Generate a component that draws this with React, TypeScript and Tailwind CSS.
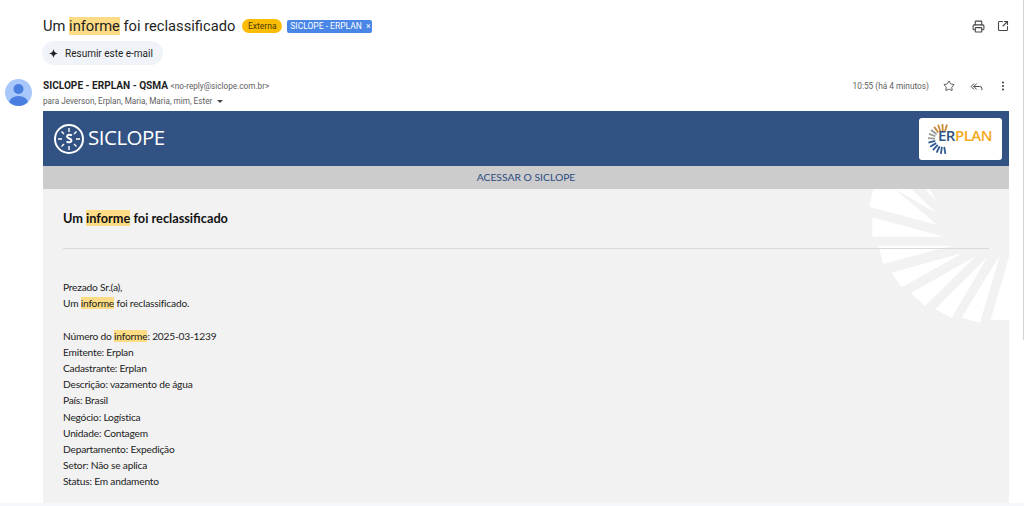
import React from "react";
import { Printer, SquareArrowOutUpRight, Star, ReplyAll, EllipsisVertical } from "lucide-react";

const Hl = ({ children }: { children: React.ReactNode }) => <span className="bg-[#fddc85]">{children}</span>;

const details = [
  "Emitente: Erplan",
  "Cadastrante: Erplan",
  "Descrição: vazamento de água",
  "País: Brasil",
  "Negócio: Logística",
  "Unidade: Contagem",
  "Departamento: Expedição",
  "Setor: Não se aplica",
  "Status: Em andamento",
];

// white rays behind the mail body
const rays = [
  "100,28 88,80 292,135 165,28",
  "165,28 288,98 215,28",
  "255,28 288,62 270,28",
  "97,112 97,170 312,170",
  "115,197 130,252 335,197",
  "155,278 185,322 370,218",
  "212,340 255,378 408,228",
  "285,388 335,413 442,232",
  "365,413 420,428 480,225",
  "452,420 507,420 507,230",
];

function SiclopeMark() {
  return (
    <svg width="32" height="32" viewBox="0 0 32 32" fill="none" stroke="white">
      <circle cx="16" cy="16" r="14" strokeWidth="2" />
      <path d="M16 5v4M16 23v4M5 16h4M23 16h4M8.5 8.5l2.5 2.5M21 21l2.500 2.500M23.500 8.500L21 11M11 21l-2.500 2.500" strokeWidth="1.400" />
      <path d="M19 12.500c-2-1.500-5-.8-5 1 0 2 4.500 2 4.500 4 0 1.800-3 2.500-5 1" strokeWidth="2" />
    </svg>
  );
}

function ErplanMark() {
  const spokes = [75, 92, 109, 126, 143, 160, 177, 194, 211, 228, 245, 262, 279];
  return (
    <svg width="22" height="30" viewBox="0 0 22 30" className="shrink-0">
      {spokes.map((a, i) => {
        const r = (a * Math.PI) / 180;
        const cx = 16;
        const cy = 15;
        return (
          <line
            key={a}
            x1={cx + 8 * Math.cos(r)}
            y1={cy - 8 * Math.sin(r)}
            x2={cx + 15 * Math.cos(r)}
            y2={cy - 15 * Math.sin(r)}
            stroke={i < 4 ? "#c98a3a" : i < 7 ? "#9a9a9a" : "#2f5a94"}
            strokeWidth="1.800"
          />
        );
      })}
    </svg>
  );
}

export default function App() {
  return (
    <div className="h-[506px] w-[1024px] overflow-hidden bg-white font-['Roboto',sans-serif] relative">
      <div className="h-[503px] flex flex-col">
        {/* Subject */}
        <div className="flex items-center pl-[43px] pr-[15px] h-[24px] mt-[14px]">
          <h1 className="text-[14.700px] leading-[24px] text-[#1f1f1f] font-normal">
            Um <Hl>informe</Hl> foi reclassificado
          </h1>
          <span className="ml-[7px] h-[14px] w-[40px] rounded-full bg-[#fbbc04] text-[#4a3a00] text-[8.500px] leading-[14px] text-center">Externa</span>
          <span className="ml-[5px] h-[13px] w-[85px] rounded-[2px] bg-[#4a86e8] text-white text-[8.500px] leading-[13px] pl-[3px] whitespace-nowrap">
            SICLOPE - ERPLAN <span className="ml-[2px]">×</span>
          </span>
          <div className="ml-auto flex items-center gap-[12px] text-[#444746]">
            <Printer size={13} strokeWidth={2} />
            <SquareArrowOutUpRight size={12} strokeWidth={2.200} />
          </div>
        </div>

        {/* Summarize */}
        <div className="pl-[42px] mt-[3px]">
          <button className="h-[24px] w-[121px] rounded-full bg-[#f0f4f9] flex items-center pl-[7px] text-[10px] text-[#1f1f1f]">
            <svg width="9" height="9" viewBox="0 0 10 10" className="mr-[7px]">
              <path d="M5 0C5.400 3 7 4.600 10 5 7 5.400 5.400 7 5 10 4.600 7 3 5.400 0 5 3 4.600 4.600 3 5 0Z" fill="#1f1f1f" />
            </svg>
            Resumir este e-mail
          </button>
        </div>

        {/* Sender */}
        <div className="flex mt-[14px] pl-[5px] pr-[15px] h-[32px]">
          <svg width="27" height="27" viewBox="0 0 27 27" className="shrink-0">
            <defs>
              <clipPath id="av"><circle cx="13.500" cy="13.500" r="13.500" /></clipPath>
            </defs>
            <g clipPath="url(#av)">
              <rect width="27" height="27" fill="#a8c7fa" />
              <circle cx="13.500" cy="10" r="5" fill="#4a7fe0" />
              <ellipse cx="13.500" cy="23.500" rx="9.500" ry="6.500" fill="#4a7fe0" />
            </g>
          </svg>
          <div className="ml-[11px] flex-1">
            <div className="text-[10.100px] leading-[13px] text-[#1f1f1f] whitespace-nowrap">
              <span className="font-bold">SICLOPE - ERPLAN - QSMA</span>{" "}
              <span className="text-[#5e5e5e] text-[8.200px]">&lt;no-reply@siclope.com.br&gt;</span>
            </div>
            <div className="text-[8.200px] leading-[13px] mt-[2px] text-[#5e5e5e] flex items-center whitespace-nowrap">
              para Jeverson, Erplan, Maria, Maria, mim, Ester
              <span className="ml-[5px] w-0 h-0 border-l-[3px] border-r-[3px] border-t-[3px] border-l-transparent border-r-transparent border-t-[#444746]" />
            </div>
          </div>
          <div className="flex items-start text-[#444746] h-[14px]">
            <span className="text-[8.300px] leading-[14px] text-[#5e5e5e] mr-[15px]">10:55 (há 4 minutos)</span>
            <Star size={12} strokeWidth={1.800} className="mr-[14px] mt-[1px] -translate-x-px" />
            <ReplyAll size={13} strokeWidth={1.800} className="mr-[14px] mt-[1px]" />
            <EllipsisVertical size={12} strokeWidth={2.400} className="mt-[1px]" />
          </div>
        </div>

        {/* Mail */}
        <div className="ml-[43px] w-[966px] flex-1 flex flex-col min-h-0 font-['Lato',sans-serif]">
          <div className="h-[55px] shrink-0 bg-[#315283] flex items-center justify-between pl-[10px] pr-[7px]">
            <div className="flex items-center gap-[3px]">
              <SiclopeMark />
              <span className="text-white text-[20.500px] leading-none font-['Open_Sans',sans-serif] tracking-[-0.5px] mb-[2px]">SICLOPE</span>
            </div>
            <div className="w-[83px] h-[42px] bg-white rounded-[3px] flex items-center pl-[8px]">
              <ErplanMark />
              <span className="text-[15px] font-['Open_Sans',sans-serif] font-semibold leading-none -ml-[11px] tracking-[-0.5px] mb-[6px]">
                <span className="text-[#315283]">ER</span>
                <span className="text-[#f5a91c]">PLAN</span>
              </span>
            </div>
          </div>
          <div className="h-[23px] shrink-0 bg-[#cccccc] text-center text-[10.350px] leading-[23px] text-[#2b4a80]">ACESSAR O SICLOPE</div>
          <div className="relative flex-1 bg-[#f2f2f2] px-[20px] overflow-hidden text-[#222222]">
            <svg width="169" height="150" viewBox="0 27 507 450" className="absolute right-0 top-0" fill="white">
              {rays.map((p) => (
                <polygon key={p} points={p} />
              ))}
            </svg>
            <div className="relative">
              <h2 className="text-[12.750px] leading-[17px] font-bold text-[#111111] mt-[21px]">
                Um <Hl>informe</Hl> foi reclassificado
              </h2>
              <div className="h-px bg-[#d9d9d9] mt-[21px]" />
              <div className="text-[10.200px] tracking-[-0.2px] leading-[16.200px] mt-[30px]">
                <p>Prezado Sr.(a),</p>
                <p>Um <Hl>informe</Hl> foi reclassificado.</p>
                <p className="mt-[16.200px]">Número do <Hl>informe</Hl>: 2025-03-1239</p>
                {details.map((d) => (
                  <p key={d}>{d}</p>
                ))}
              </div>
            </div>
          </div>
        </div>
      </div>
      <div className="h-[3px] bg-[#f4f8fc]" />
      <div className="absolute right-0 top-0 h-[340px] w-px bg-[#d4d4d4]" />
    </div>
  );
}
